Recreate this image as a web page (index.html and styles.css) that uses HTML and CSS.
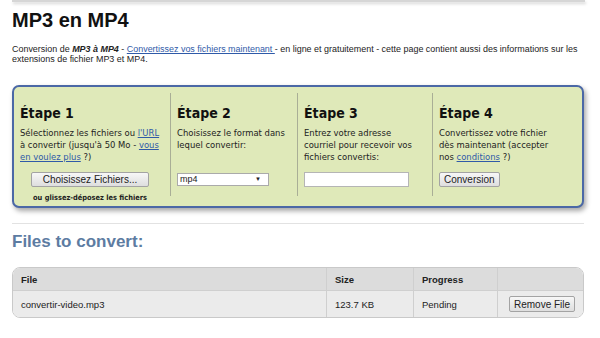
FILE: index.html
```html
<!doctype html>
<html>
  <head>
    <meta charset="utf-8">
    <title>MP3 en MP4</title>
    <link rel="stylesheet" href="styles.css">
  </head>
  <body>
    <div class="topbar"></div>
    <div id="content">
      <h1>MP3 en MP4</h1>
      <p class="intro">Conversion de <b><i>MP3 à MP4</i></b> - <a href="#">Convertissez vos fichiers maintenant </a>- en ligne et gratuitement - cette page contient aussi des informations sur les<br>extensions de fichier MP3 et MP4.</p>

      <div class="steps">
        <div class="step">
          <h3>Étape 1</h3>
          <p>Sélectionnez les fichiers ou <a href="#">l'URL</a><br>à convertir (jusqu'à 50 Mo - <a href="#">vous</a><br><a href="#">en voulez plus</a> ?)</p>
          <div class="ctrl center">
            <button class="btn wide">Choisissez Fichiers...</button>
            <small class="drop">ou glissez-déposez les fichiers</small>
          </div>
        </div>
        <div class="step">
          <h3>Étape 2</h3>
          <p>Choisissez le format dans<br>lequel convertir:</p>
          <div class="ctrl">
            <span class="select">mp4<span class="arrow">&#9660;</span></span>
          </div>
        </div>
        <div class="step">
          <h3>Étape 3</h3>
          <p>Entrez votre adresse<br>courriel pour recevoir vos<br>fichiers convertis:</p>
          <div class="ctrl">
            <input class="email" type="text">
          </div>
        </div>
        <div class="step last">
          <h3>Étape 4</h3>
          <p>Convertissez votre fichier<br>dès maintenant (accepter<br>nos <a href="#">conditions</a> ?)</p>
          <div class="ctrl">
            <button class="btn">Conversion</button>
          </div>
        </div>
      </div>

      <hr>
      <h2>Files to convert:</h2>

      <div class="files">
        <table>
          <tr>
            <th class="c-file">File</th>
            <th class="c-size">Size</th>
            <th class="c-prog">Progress</th>
            <th class="c-act"></th>
          </tr>
          <tr>
            <td>convertir-video.mp3</td>
            <td>123.7 KB</td>
            <td>Pending</td>
            <td class="c-act"><button class="btn rm">Remove File</button></td>
          </tr>
        </table>
      </div>
    </div>
  </body>
</html>
```

FILE: styles.css
```css
body { margin: 0; font-family: "Liberation Sans", Arial, sans-serif; color: #222; background: #fff; }
a { color: #2f5aa8; }
.topbar { height: 2px; margin: 0 15px 0 12px; background: #d6d6d6; box-shadow: 1px 2px 3px rgba(0,0,0,.18); }
#content { padding: 0 16px 0 12px; }
h1 { font-size: 20px; line-height: 20px; margin: 8px 0 0 0; color: #111; }
.intro { font-size: 8.95px; line-height: 10px; margin: 14px 0 0 0; white-space: nowrap; }

/* green step box */
.steps { margin-top: 21px; display: grid; grid-template-columns: 156px 127px 135px 1fr; padding: 6px 0 10px; background: #dfe9b9; border: 2px solid #4b68a6; border-radius: 7px; box-shadow: 2px 3px 5px rgba(0,0,0,.35); font-family: "DejaVu Sans Condensed", "DejaVu Sans", sans-serif; font-stretch: condensed; }
.step { display: flex; flex-direction: column; padding: 0 4px 0 6px; }
.step + .step { border-left: 1px solid #a9ae96; }
.step h3 { font-size: 14px; line-height: 16px; margin: 12px 0 0 0; color: #111; }
.step p { font-size: 9.4px; line-height: 12px; height: 36px; margin: 6px 0 0 0; }
.ctrl { margin-top: 9px; height: 15px; display: flex; align-items: center; }
.ctrl.center { flex-direction: column; align-items: center; height: auto; margin-bottom: -6px; }
.btn { font-family: "Liberation Sans", Arial, sans-serif; font-size: 10px; height: 15px; padding: 0 4px; border: 1px solid #a3a3a3; border-radius: 2px; background: linear-gradient(#f7f7f7, #dedede); color: #222; }
.btn.wide { width: 118px; margin-left: -6px; }
.drop { font-size: 7.4px; font-weight: bold; margin-top: 6px; margin-left: -6px; }
.select { width: 88px; height: 11px; border: 1px solid #aaa; background: #fff; font-family: "Liberation Sans", Arial, sans-serif; font-size: 9px; line-height: 11px; padding-left: 2px; display: flex; justify-content: space-between; }
.arrow { font-size: 6px; padding-right: 7px; }
.email { width: 103px; height: 13px; border: 1px solid #b5b5b5; padding: 0; margin: 0; }

hr { border: 0; border-top: 1px solid #e2e2e2; margin: 15px 0 0 0; }
h2 { font-size: 17px; line-height: 20px; margin: 8px 0 0 0; color: #5d7ca2; }

.files { margin-top: 15px; border: 1px solid #c9c9c9; border-radius: 8px; overflow: hidden; }
.files table { width: 100%; border-collapse: collapse; font-size: 9.5px; }
.files th { background: #dcdcdc; text-align: left; height: 22px; padding: 0 0 0 8px; }
.files td { background: #ebebeb; height: 26px; padding: 0 0 0 8px; border-top: 1px solid #cfcfcf; }
.files th + th, .files td + td { border-left: 1px solid #cfcfcf; }
.c-file { width: 305px; }
.c-size { width: 78px; }
.c-prog { width: 75px; }
.files .c-act { padding-left: 11px; }
.btn.rm { height: 16px; font-size: 10px; }
```
